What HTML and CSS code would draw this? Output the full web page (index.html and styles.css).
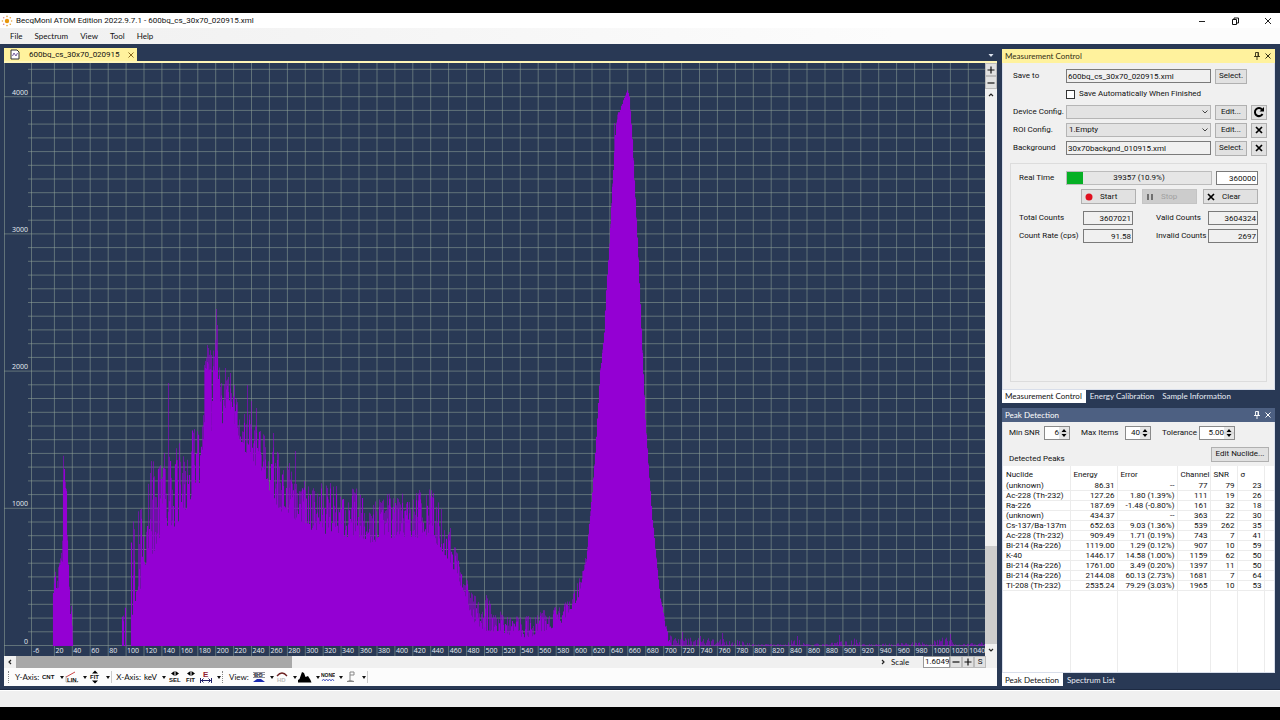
FILE: index.html
```html
<!DOCTYPE html>
<html lang="en">
<head>
<meta charset="utf-8">
<title>BecqMoni ATOM Edition</title>
<link rel="stylesheet" href="styles.css">
</head>
<body>
<div class="window">
  <header class="titlebar">
    <svg class="app-icon" viewBox="0 0 12 12"><g fill="#e6a23c"><circle cx="6" cy="6" r="2.2" fill="#e8960c"/><circle cx="6" cy="1.4" r=".8"/><circle cx="6" cy="10.6" r=".8"/><circle cx="1.4" cy="6" r=".8"/><circle cx="10.6" cy="6" r=".8"/><circle cx="2.7" cy="2.7" r=".8" fill="#d88"/><circle cx="9.3" cy="2.7" r=".8"/><circle cx="2.7" cy="9.3" r=".8" fill="#c79"/><circle cx="9.3" cy="9.3" r=".8"/></g></svg>
    <h1 class="title">BecqMoni ATOM Edition 2022.9.7.1 - 600bq_cs_30x70_020915.xml</h1>
    <div class="window-buttons">
      <button class="flat" aria-label="Minimize"><svg viewBox="0 0 10 10" class="ico10"><path d="M2 5.500h6" stroke="#222"/></svg></button>
      <button class="flat" aria-label="Restore"><svg viewBox="0 0 10 10" class="ico10"><path d="M2.500 3.500h4v5h-4zM4 3.500v-1.500h4.500v5h-2" fill="none" stroke="#111"/></svg></button>
      <button class="flat" aria-label="Close"><svg viewBox="0 0 10 10" class="ico10"><path d="M2 2l6 6M8 2l-6 6" stroke="#222"/></svg></button>
    </div>
  </header>
  <nav class="menubar">
    <button class="flat">File</button><button class="flat">Spectrum</button><button class="flat">View</button><button class="flat">Tool</button><button class="flat">Help</button>
  </nav>
  <main class="workspace">
    <section class="document">
      <div class="doc-tabs">
        <div class="doc-tab">
          <svg viewBox="0 0 10 11" class="doc-icon"><path d="M1 1h6l2 2v7H1z" fill="#fff" stroke="#333"/><path d="M2.500 7l1.500-3 2 3 1.500-3" fill="none" stroke="#745a9c"/></svg>
          <span>600bq_cs_30x70_020915</span>
          <button class="flat" aria-label="Close tab"><svg viewBox="0 0 8 8" class="ico8"><path d="M1.500 1.500l5 5M6.500 1.500l-5 5" stroke="#8a6a20"/></svg></button>
        </div>
        <button class="flat tab-list" aria-label="Tab list"><svg viewBox="0 0 8 8" class="ico8"><path d="M1.500 3h5l-2.500 3z" fill="#dde3ee"/></svg></button>
      </div>
      <div class="doc-body">
        <div class="chart-row">
          <div class="chart" id="chart">
            <svg id="plot" class="plot" viewBox="0 0 981 593" preserveAspectRatio="none"></svg>
          </div>
          <div class="vscroll">
            <button class="tool" aria-label="Zoom in"><svg viewBox="0 0 10 10" class="ico10"><path d="M1.500 5h7M5 1.500v7" stroke="#111" stroke-width="1.200"/></svg></button>
            <button class="tool" aria-label="Zoom out"><svg viewBox="0 0 10 10" class="ico10"><path d="M1.500 5h7" stroke="#111" stroke-width="1.200"/></svg></button>
            <button class="flat arrow" aria-label="Up"><svg viewBox="0 0 8 8" class="ico8"><path d="M2 5l2-2 2 2" fill="none" stroke="#222" stroke-width="1.200"/></svg></button>
            <div class="vtrack"><div class="vthumb"></div></div>
            <button class="flat arrow" aria-label="Down"><svg viewBox="0 0 8 8" class="ico8"><path d="M2 3l2 2 2-2" fill="none" stroke="#222" stroke-width="1.200"/></svg></button>
          </div>
        </div>
        <div class="scale-row">
          <button class="flat arrow" aria-label="Left"><svg viewBox="0 0 8 8" class="ico8"><path d="M5 2L3 4l2 2" fill="none" stroke="#222" stroke-width="1.200"/></svg></button>
          <div class="htrack"><div class="hthumb"></div></div>
          <button class="flat arrow" aria-label="Right"><svg viewBox="0 0 8 8" class="ico8"><path d="M3 2l2 2-2 2" fill="none" stroke="#222" stroke-width="1.200"/></svg></button>
          <label class="scale-label" for="scale">Scale</label>
          <input id="scale" class="scale-input" value="1.6049">
          <button class="tool" aria-label="Decrease"><svg viewBox="0 0 10 10" class="ico10"><path d="M1.500 5h7" stroke="#111" stroke-width="1.200"/></svg></button>
          <button class="tool" aria-label="Increase"><svg viewBox="0 0 10 10" class="ico10"><path d="M1.500 5h7M5 1.500v7" stroke="#111" stroke-width="1.200"/></svg></button>
          <button class="tool">S</button>
        </div>
        <div class="toolbar">
          <i class="grip"></i><span class="tb-label">Y-Axis:</span>
          <button class="flat drop"><svg viewBox="0 0 14 14" class="ico14"><text x="0" y="9" class="bold6">CNT</text></svg></button>
          <button class="flat drop"><svg viewBox="0 0 14 14" class="ico14"><path d="M1 7l9-5" stroke="#c44" fill="none"/><path d="M1 6v6h12" stroke="#888" fill="none" stroke-width=".6"/><text x="2" y="12" class="bold6">LIN.</text></svg></button>
          <button class="flat drop"><svg viewBox="0 0 14 14" class="ico14"><path d="M4 3.500l3-3 3 3zM4 10.500l3 3 3-3z"/><text x="2" y="9" class="bold6">FIT</text></svg></button>
          <i class="sep"></i><span class="tb-label">X-Axis:</span>
          <button class="flat drop"><svg viewBox="0 0 14 14" class="ico14"><text x="0" y="10" class="plain8">keV</text></svg></button>
          <button class="flat solo"><svg viewBox="0 0 14 14" class="ico14"><path d="M6.500 1v5L3 3.500zM7.500 1v5L11 3.500z"/><text x="1" y="12" class="bold6">SEL</text></svg></button>
          <button class="flat solo"><svg viewBox="0 0 14 14" class="ico14"><path d="M6.500 1v5L3 3.500zM7.500 1v5L11 3.500z"/><text x="2" y="12" class="bold6">FIT</text></svg></button>
          <button class="flat drop"><svg viewBox="0 0 14 14" class="ico14"><text x="4" y="7" class="bold8">E</text><path d="M1.500 8v5M12.500 8v5M2 10.500h10M4.500 8.500l-2 2 2 2M9.500 8.500l2 2-2 2" stroke="#22226a" fill="none"/></svg></button>
          <i class="grip"></i><span class="tb-label">View:</span>
          <button class="flat drop"><svg viewBox="0 0 14 14" class="ico14"><text x="2" y="7" class="bold6 navy">BG</text><path d="M1 2.500h12M1 4.500h12M1 7.500h12" stroke="#445" stroke-width=".6"/><path d="M1 12l4-3h4l4 3z" fill="#1a2ab0"/></svg></button>
          <button class="flat drop"><svg viewBox="0 0 14 14" class="ico14"><path d="M2 6q5-6 10 0" fill="none" stroke="#6b2020" stroke-width="1.300"/><text x="2" y="12" class="bold6 pale">HD</text></svg></button>
          <button class="flat drop"><svg viewBox="0 0 14 14" class="ico14"><path d="M0 12.500V10l1.500-1L4 2l2 1 1.500 4L10 6l2.500 4 1 2.500z"/></svg></button>
          <button class="flat drop"><svg viewBox="0 0 14 14" class="ico14"><text x="0" y="7" class="bold5">NONE</text><path d="M1 11l1.500-2L4 11l1.500-2L7 11l1.500-2 1.500 2 1.500-2 1.500 2" fill="none" stroke="#3344bb" stroke-width=".8"/></svg></button>
          <button class="flat drop"><svg viewBox="0 0 14 14" class="ico14"><path d="M6 11V2h4v3H6M3 11.500q3-2 7 0z" fill="none" stroke="#888"/></svg></button>
          <i class="sep"></i>
        </div>
      </div>
    </section>

    <aside class="side">
      <section class="panel measure">
        <header class="panel-head active"><h2>Measurement Control</h2>
          <button class="flat" aria-label="Pin"><svg viewBox="0 0 8 8" class="ico8"><path d="M2.500.5h3v4h-3zM1 4.500h6M4 4.500V8M5 .5v4" fill="none" stroke="currentColor" stroke-width=".9"/></svg></button>
          <button class="flat" aria-label="Close"><svg viewBox="0 0 8 8" class="ico8"><path d="M1.500 1.500l5 5M6.500 1.500l-5 5" stroke="currentColor"/></svg></button>
        </header>
        <div class="panel-body">
          <div class="config">
            <label for="save">Save to</label><input id="save" value="600bq_cs_30x70_020915.xml"><button class="btn">Select.</button><span></span>
            <span></span><label class="check"><input type="checkbox">Save Automatically When Finished</label>
            <label for="device">Device Config.</label><select id="device"><option></option></select><button class="btn">Edit...</button>
            <button class="btn" aria-label="Reload"><svg viewBox="0 0 12 12" class="ico12"><path d="M9.500 8a4 4 0 1 1-.5-4.500" fill="none" stroke="#000" stroke-width="2"/><path d="M6.500 5.500H11V1z"/></svg></button>
            <label for="roi">ROI Config.</label><select id="roi"><option>1.Empty</option></select><button class="btn">Edit...</button>
            <button class="btn" aria-label="Clear ROI"><svg viewBox="0 0 12 12" class="ico12"><path d="M3 3l6 6M9 3L3 9" stroke="#000" stroke-width="1.700"/></svg></button>
            <label for="bg">Background</label><input id="bg" value="30x70backgnd_010915.xml"><button class="btn">Select.</button>
            <button class="btn" aria-label="Clear background"><svg viewBox="0 0 12 12" class="ico12"><path d="M3 3l6 6M9 3L3 9" stroke="#000" stroke-width="1.700"/></svg></button>
          </div>
          <div class="group">
            <div class="time-row"><label for="preset">Real Time</label><div class="progress"><div class="progress-fill"></div><span>39357 (10.9%)</span></div><input id="preset" class="num white" value="360000"></div>
            <div class="run-row">
              <button class="btn run"><svg viewBox="0 0 10 10" class="ico10"><circle cx="5" cy="5" r="3.500" fill="#e01020"/></svg><span>Start</span></button>
              <button class="btn run" disabled><svg viewBox="0 0 10 10" class="ico10"><path d="M3 2v6M7 2v6" stroke="#666" stroke-width="1.800"/></svg><span>Stop</span></button>
              <button class="btn run"><svg viewBox="0 0 10 10" class="ico10"><path d="M2 2l6 6M8 2L2 8" stroke="#000" stroke-width="1.700"/></svg><span>Clear</span></button>
            </div>
            <div class="counts">
              <label for="total">Total Counts</label><input id="total" class="num" readonly value="3607021"><label for="valid">Valid Counts</label><input id="valid" class="num" readonly value="3604324">
              <label for="rate">Count Rate (cps)</label><input id="rate" class="num" readonly value="91.58"><label for="invalid">Invalid Counts</label><input id="invalid" class="num" readonly value="2697">
            </div>
          </div>
        </div>
        <div class="panel-tabs"><button class="tab on">Measurement Control</button><button class="tab">Energy Calibration</button><button class="tab">Sample Information</button></div>
      </section>
      <section class="panel peaks">
        <header class="panel-head"><h2>Peak Detection</h2>
          <button class="flat" aria-label="Pin"><svg viewBox="0 0 8 8" class="ico8"><path d="M2.500.5h3v4h-3zM1 4.500h6M4 4.500V8M5 .5v4" fill="none" stroke="currentColor" stroke-width=".9"/></svg></button>
          <button class="flat" aria-label="Close"><svg viewBox="0 0 8 8" class="ico8"><path d="M1.500 1.500l5 5M6.500 1.500l-5 5" stroke="currentColor"/></svg></button>
        </header>
        <div class="panel-body">
          <div class="filters">
            <label for="snr">Min SNR</label><span class="spin"><input id="snr" type="number" value="6"><button class="flat" aria-label="Step SNR"><svg viewBox="0 0 10 12" class="spin-ico"><path d="M2.500 5L5 2l2.500 3zM2.500 7L5 10l2.500-3z"/><path d="M0 6h10" stroke="#bbb" stroke-width=".7"/></svg></button></span>
            <label for="items">Max Items</label><span class="spin"><input id="items" type="number" value="40"><button class="flat" aria-label="Step items"><svg viewBox="0 0 10 12" class="spin-ico"><path d="M2.500 5L5 2l2.500 3zM2.500 7L5 10l2.500-3z"/><path d="M0 6h10" stroke="#bbb" stroke-width=".7"/></svg></button></span>
            <label for="tol">Tolerance</label><span class="spin wide"><input id="tol" type="number" step="0.01" value="5.00"><button class="flat" aria-label="Step tolerance"><svg viewBox="0 0 10 12" class="spin-ico"><path d="M2.500 5L5 2l2.500 3zM2.500 7L5 10l2.500-3z"/><path d="M0 6h10" stroke="#bbb" stroke-width=".7"/></svg></button></span>
          </div>
          <div class="detected"><span>Detected Peaks</span><button class="btn">Edit Nuclide...</button></div>
          <div class="table-wrap">
            <table>
              <colgroup><col class="c1"><col class="c2"><col class="c3"><col class="c4"><col class="c5"><col class="c6"><col></colgroup>
              <thead><tr><th>Nuclide</th><th>Energy</th><th>Error</th><th>Channel</th><th>SNR</th><th>σ</th><th></th></tr></thead>
              <tbody>
                <tr><td>(unknown)</td><td>86.31</td><td>--</td><td>77</td><td>79</td><td>23</td><td></td></tr>
                <tr><td>Ac-228 (Th-232)</td><td>127.26</td><td>1.80 (1.39%)</td><td>111</td><td>19</td><td>26</td><td></td></tr>
                <tr><td>Ra-226</td><td>187.69</td><td>-1.48 (-0.80%)</td><td>161</td><td>32</td><td>18</td><td></td></tr>
                <tr><td>(unknown)</td><td>434.37</td><td>--</td><td>363</td><td>22</td><td>30</td><td></td></tr>
                <tr><td>Cs-137/Ba-137m</td><td>652.63</td><td>9.03 (1.36%)</td><td>539</td><td>262</td><td>35</td><td></td></tr>
                <tr><td>Ac-228 (Th-232)</td><td>909.49</td><td>1.71 (0.19%)</td><td>743</td><td>7</td><td>41</td><td></td></tr>
                <tr><td>Bi-214 (Ra-226)</td><td>1119.00</td><td>1.29 (0.12%)</td><td>907</td><td>10</td><td>59</td><td></td></tr>
                <tr><td>K-40</td><td>1446.17</td><td>14.58 (1.00%)</td><td>1159</td><td>62</td><td>50</td><td></td></tr>
                <tr><td>Bi-214 (Ra-226)</td><td>1761.00</td><td>3.49 (0.20%)</td><td>1397</td><td>11</td><td>50</td><td></td></tr>
                <tr><td>Bi-214 (Ra-226)</td><td>2144.08</td><td>60.13 (2.73%)</td><td>1681</td><td>7</td><td>64</td><td></td></tr>
                <tr><td>Tl-208 (Th-232)</td><td>2535.24</td><td>79.29 (3.03%)</td><td>1965</td><td>10</td><td>53</td><td></td></tr>
                <tr class="filler"><td></td><td></td><td></td><td></td><td></td><td></td><td></td></tr>
              </tbody>
            </table>
          </div>
        </div>
        <div class="panel-tabs"><button class="tab on">Peak Detection</button><button class="tab">Spectrum List</button></div>
      </section>
    </aside>
  </main>
  <footer class="statusbar"></footer>
</div>
<script src="chart.js"></script>
</body>
</html>
```

FILE: styles.css
```css
* { box-sizing: border-box; }
body { margin: 0; background: #000; }
.window {
  height: 100vh; min-height: 560px; display: flex; flex-direction: column;
  padding: 13px 0; background: #000;
  font: 8px/12px Roboto, "Liberation Sans", sans-serif; color: #111;
}
button, input, select { font: inherit; color: inherit; margin: 0; padding: 0; border-radius: 0; min-width: 0; }
h1, h2 { margin: 0; font-weight: normal; font-size: inherit; }
svg { display: block; flex: none; }
.flat { border: 0; background: none; display: flex; align-items: center; justify-content: center; }
.ico8 { width: 8px; height: 8px; }
.ico10 { width: 10px; height: 10px; }
.ico12 { width: 12px; height: 12px; }
.ico14 { width: 14px; height: 14px; }

.menubar, .panel-head, .panel-tabs, .tb-label, .scale-label { font-family: Lato, sans-serif; }
.titlebar { display: flex; align-items: center; gap: 3px; height: 15px; padding: 0 4px 0 1px; background: #fff; }
.app-icon { width: 12px; height: 12px; }
.window-buttons { display: flex; gap: 23px; margin-left: auto; padding-right: 3px; }
.menubar { display: flex; gap: 12px; height: 16px; padding: 0 10px; background: linear-gradient(90deg, #f0f0f0, #fcfcfc 70%); }

.workspace { flex: 1; min-height: 0; display: flex; gap: 5px; padding: 4px 5px 3px 4px; background: #293955; border-bottom: 1px solid #1d2a42; }
.document { flex: 1; min-width: 0; display: flex; flex-direction: column; }
.doc-tabs { display: flex; justify-content: space-between; border-bottom: 2px solid #fff6b8; height: 15px; }
.doc-tab { display: flex; align-items: center; gap: 9px; width: 133px; padding: 0 3px 0 6px; background: #fff29d; }
.doc-tab button { margin-left: auto; }
.doc-icon { width: 10px; height: 11px; }
.tab-list { width: 12px; }
.doc-body { flex: 1; display: flex; flex-direction: column; }
.chart-row { flex: 1; display: flex; }
.chart { flex: 1; position: relative; background: #293955; overflow: hidden; font: 7px/10px "Open Sans", sans-serif; color: #e6ebf2; }
.plot { position: absolute; inset: 0; width: 100%; height: 100%; }
.ylab, .xlab { position: absolute; }
.ylab { width: 24px; text-align: right; transform: translateY(-9px); }
.xlab { bottom: 0; padding-left: 1px; }

.vscroll { width: 12px; display: flex; flex-direction: column; background: #f0f0f0; }
.tool { border: 1px solid #bcbcbc; background: #e1e1e1; display: flex; align-items: center; justify-content: center; width: 12px; height: 12px; overflow: hidden; }
.vscroll .tool { height: 13px; }
.arrow { width: 12px; height: 12px; }
.vtrack { flex: 1; display: flex; flex-direction: column; justify-content: flex-end; }
.vthumb { height: 18%; background: #cdcdcd; }
.scale-row { display: flex; height: 12px; background: #f0f0f0; padding-right: 11px; }
.htrack { flex: 1; }
.hthumb { width: 32%; height: 100%; background: #a8a8a8; }
.scale-label { width: 34px; padding-left: 2px; }
.scale-input { width: 27px; border: 1px solid #999; background: #fff; padding-left: 1px; }
.toolbar { display: flex; align-items: center; height: 18px; background: #fcfcfc; padding-left: 4px; }
.tb-label { padding: 0 3px; }
.grip { width: 4px; height: 12px; border-left: 1px dotted #888; }
.sep { width: 2px; height: 12px; border-left: 1px solid #ccc; }
.drop { width: 23px; justify-content: flex-start; gap: 4px; }
.drop::after { content: ""; border: 2px solid transparent; border-top: 3px solid #111; border-bottom: 0; }
.solo { width: 16px; }
.bold5, .bold6, .bold8 { font: bold 6px "Liberation Sans", sans-serif; fill: #111; }
.bold5 { font-size: 5px; }
.bold8 { font-size: 8px; fill: #902030; }
.plain8 { font: 8px Lato, sans-serif; }
.navy { fill: #223; }
.pale { fill: #bbb; }

.side { width: 273px; flex: none; display: flex; flex-direction: column; gap: 5px; padding-top: 1px; }
.panel { display: flex; flex-direction: column; min-height: 0; }
.measure { flex: 355 0 0; }
.peaks { flex: 279 0 0; }
.panel-head { display: flex; align-items: center; gap: 3px; height: 14px; padding: 0 3px; background: #4d6082; color: #fff; }
.panel-head h2 { flex: 1; }
.panel-head.active { background: #fff29d; color: #332f14; }
.panel-body { flex: 1; min-height: 0; display: flex; flex-direction: column; background: #f0f0f0; border: solid #d8deea; border-width: 0 1px 1px; overflow: hidden; }
.panel-tabs { display: flex; height: 13px; }
.tab { border: 0; background: none; color: #e8ecf4; padding: 0 4px; }
.tab.on { background: #fff; color: #111; padding-left: 3px; }

.config { display: grid; grid-template-columns: 49px 1fr 32px 16px; grid-auto-rows: 18px; column-gap: 4px; align-items: center; padding: 4px 7px 0 10px; white-space: nowrap; }
.config > input, .config > select { width: 100%; height: 14px; border: 1px solid #7a7a7a; background: #f0f0f0; padding: 0 1px; }
.config > select {
  appearance: none; border-color: #b5b5b5; padding: 0 2px;
  background: #e3e3e3 url("data:image/svg+xml,%3Csvg xmlns='http://www.w3.org/2000/svg' width='8' height='8'%3E%3Cpath d='M1.500 2.500L4 5l2.500-2.500' fill='none' stroke='%23444'/%3E%3C/svg%3E") no-repeat right 1px center;
}
.check { grid-column: span 3; display: flex; align-items: center; gap: 4px; }
.check input { appearance: none; width: 9px; height: 9px; border: 1px solid #333; background: #fff; }
.btn { border: 1px solid #b0b0b0; background: #e1e1e1; height: 15px; display: flex; align-items: center; justify-content: center; }
.group { flex: 1; margin: 6px 7px 7px; border: 1px solid #dcdcdc; padding: 7px 8px; display: flex; flex-direction: column; gap: 4px; white-space: nowrap; }
.time-row { display: grid; grid-template-columns: 43px 1fr 42px; column-gap: 4px; align-items: center; }
.progress { display: flex; position: relative; height: 14px; background: #e6e6e6; border: 1px solid #bcbcbc; justify-content: center; }
.progress span { position: relative; }
.progress-fill { position: absolute; left: 0; top: 0; bottom: 0; width: 10.9%; background: #06b025; }
.num { text-align: right; border: 1px solid #7a7a7a; background: #f0f0f0; height: 14px; width: 100%; padding: 0 1px; }
.white { background: #fff; }
.run-row { display: flex; justify-content: flex-end; gap: 6px; }
.run { width: 55px; justify-content: flex-start; padding-left: 2px; gap: 6px; }
.run:disabled { background: #cccccc; color: #a0a0a0; border-color: #c4c4c4; }
.counts { display: grid; grid-template-columns: 64px 50px 1fr 50px; grid-auto-rows: 18px; align-items: center; padding-top: 1px; }
.counts label:nth-of-type(even) { padding-left: 23px; }
.filters { display: flex; align-items: center; height: 23px; padding-left: 6px; white-space: nowrap; }
.filters label { width: 35px; }
.filters .spin + label { padding-left: 11px; width: 55px; }
.filters .spin + label:last-of-type { width: 48px; }
.spin { display: flex; width: 26px; height: 14px; border: 1px solid #8a8a8a; background: #fff; }
.spin.wide { width: 36px; }
.spin input { flex: 1; width: 10px; border: 0; background: none; text-align: right; appearance: textfield; }
.spin input::-webkit-inner-spin-button { appearance: none; margin: 0; }
.spin button { width: 10px; background: #e6e6e6; }
.spin-ico { width: 10px; height: 12px; }
.detected { display: flex; justify-content: space-between; align-items: center; height: 21px; padding: 0 5px 0 6px; }
.detected span { padding-top: 8px; }
.detected .btn { width: 58px; margin-bottom: 2px; white-space: nowrap; }
.table-wrap { flex: 1; min-height: 0; display: flex; background: #fff; overflow: hidden; }
table { width: 100%; border-collapse: collapse; table-layout: fixed; line-height: 9px; }
th, td { padding: 0 3px; font-weight: normal; text-align: left; white-space: nowrap; border: 1px solid #ececec; border-top: 0; }
th { height: 15px; border-bottom: 0; padding-top: 3px; }
td { height: 10px; text-align: right; padding-right: 2px; }
tr > :first-child { text-align: left; border-left: 0; padding-left: 3px; }
tr > :last-child { border-right: 0; }
.filler td { height: auto; border-bottom: 0; }
.c1 { width: 67px; } .c2 { width: 47px; } .c3 { width: 60px; } .c4 { width: 33px; } .c5 { width: 27px; } .c6 { width: 27px; }
.statusbar { height: 17px; background: #f0f0f0; border-top: 1px solid #fff; }
```

FILE: chart.js
```js
const W = 981, H = 593, BASE = 582.5, PER_1000 = 137.2, STEP = 17.92;
const plot = document.getElementById('plot');
const chart = document.getElementById('chart');
const gridX = n => 50.4 + STEP * n;

let grid = 'M27.5 0V593M.5 0V593M0 582.5H981';
for (let n = 0; gridX(n) < W; n++) grid += `M${gridX(n).toFixed(1)} 0V593`;
for (let n = 1; n <= 42; n++) {
  const y = (BASE - n * PER_1000 / 10).toFixed(1);
  grid += `M${n % 10 ? 24 : 0} ${y}H${W}`;
}

// Envelope of the spectrum: x, top of the solid fill, top of the noise
const envelope = [
  [49, 530, 507], [55, 525, 500], [58, 500, 470], [59, 440, 378], [60, 430, 390], [61, 425, 410], [62, 430, 422],
  [63, 480, 470], [65, 530, 520], [67, 575, 540], [69, 583, 583], [117, 583, 583], [118, 583, 515], [120, 583, 583],
  [122, 583, 455], [123, 583, 583], [126, 583, 583], [127, 560, 470], [130, 540, 425], [135, 530, 440], [141, 505, 450],
  [146, 500, 390], [153, 480, 390], [158, 480, 380], [163, 465, 380], [168, 470, 390], [176, 455, 370], [181, 450, 390],
  [189, 430, 355], [196, 420, 330], [200, 380, 300], [201, 305, 290], [206, 310, 285], [207, 370, 280], [211, 300, 262],
  [214, 320, 290], [216, 375, 310], [222, 340, 310], [228, 350, 318], [230, 370, 325],
  [234, 375, 340], [241, 390, 345], [248, 405, 355], [256, 405, 365], [266, 430, 375], [276, 450, 390], [286, 450, 400],
  [296, 465, 415], [316, 470, 420], [336, 475, 420], [356, 475, 425], [366, 480, 435], [386, 475, 430], [406, 475, 428],
  [426, 475, 425], [436, 485, 440], [444, 500, 460], [452, 510, 478], [460, 535, 510], [470, 560, 530], [481, 568, 530],
  [492, 570, 545], [505, 572, 549], [525, 575, 550], [546, 566, 545], [560, 558, 540], [569, 545, 528], [576, 530, 510],
  [582, 500, 490], [588, 430, 425], [591, 390, 388], [596, 310, 305], [600, 270, 265], [602, 230, 226], [605, 185, 180],
  [608, 125, 120], [611, 72, 68], [613, 57, 50], [616, 47, 42], [619, 38, 36], [623, 28, 27], [625, 34, 32],
  [628, 78, 75], [631, 137, 134], [634, 197, 194], [638, 290, 287], [641, 357, 354], [645, 417, 414], [648, 457, 454],
  [652, 497, 494], [656, 537, 534], [660, 558, 552], [664, 580, 565], [668, 583, 574], [745, 583, 577], [750, 583, 581],
  [782, 583, 581], [787, 583, 576], [796, 583, 576], [800, 583, 581], [825, 583, 580], [850, 583, 575], [860, 583, 581],
  [895, 583, 580], [925, 583, 578], [944, 583, 572], [950, 583, 581], [981, 583, 579]
];
const spikes = [[164, 320], [203, 282], [204, 285], [207, 292], [212, 246], [213, 262], [221, 305], [226, 310], [230, 322], [243, 322], [247, 338], [252, 345], [269, 370], [285, 400], [291, 388], [610, 60], [622, 30], [678, 569], [696, 573], [718, 570], [793, 573], [835, 572], [946, 571]];

let seed = 71;
const random = () => (seed = (seed * 16807) % 2147483647) / 2147483647;
const bar = (x, top) => `M${x + .5} ${BASE + .5}V${top.toFixed(1)}`;
let solid = '', faint = '';
for (let i = 0; i < envelope.length - 1; i++) {
  const [x0, lo0, hi0] = envelope[i], [x1, lo1, hi1] = envelope[i + 1];
  for (let x = x0; x < x1; x++) {
    const t = (x - x0) / (x1 - x0);
    const lo = lo0 + (lo1 - lo0) * t, hi = hi0 + (hi1 - hi0) * t;
    const r = random(), s = random();
    const a = lo - (lo - hi) * r * r * .9;
    if (x < 667 && a < BASE) solid += bar(x, a);
    if (x > 667 ? s > .15 : s > .35) faint += bar(x, lo - (lo - hi) * (x > 667 ? r : Math.max(r, s)));
  }
}
for (const [x, y] of spikes) faint += bar(x, y);

plot.innerHTML =
  `<path d="${grid}" stroke="#8fa398" stroke-opacity=".55" fill="none"/>` +
  `<path d="${faint}" stroke="#9400d3" stroke-opacity=".6" fill="none"/>` +
  `<path d="${solid}" stroke="#9400d3" stroke-width="1.1" fill="none"/>`;

function label(cls, text, side, pct) {
  const el = document.createElement('span');
  el.className = cls;
  el.textContent = text;
  el.style[side] = pct + '%';
  chart.append(el);
}
for (let n = 0; n <= 4; n++) label('ylab', n * 1000, 'top', (BASE - n * PER_1000) / H * 100);
label('xlab', -6, 'left', 28 / W * 100);
for (let n = 0; n <= 51; n++) label('xlab', 20 + n * 20, 'left', gridX(n) / W * 100);
```
